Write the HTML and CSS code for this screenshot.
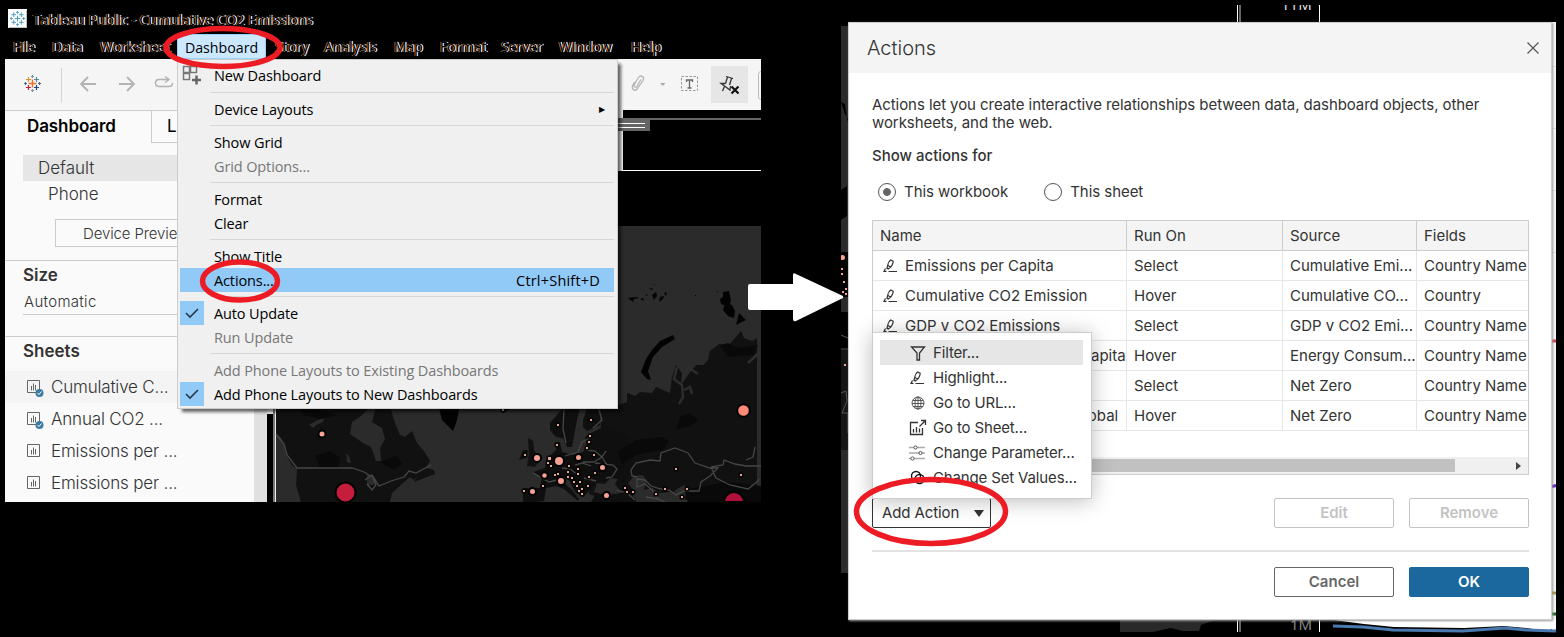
FILE: index.html
```html
<!DOCTYPE html>
<html lang="en">
<head>
<meta charset="utf-8">
<title>Tableau Public - Cumulative CO2 Emissions</title>
<link rel="stylesheet" href="styles.css">
</head>
<body>
<svg class="defs" width="0" height="0">
  <symbol id="sheet" viewBox="0 0 18 18"><path d="M1.500 1.500h12v12h-12z" fill="none" stroke="#666"/><path d="M5.500 7v4.500M7.500 4.500v7M9.500 6v5.500" stroke="#666" fill="none"/></symbol>
  <symbol id="pen" viewBox="0 0 16 14"><path d="M7.700 1l2.400 1.200c.4 1.600-1.600 5-2.400 5.800L4.800 6.500C4.800 5 6.300 2 7.700 1zM4.800 6.500l-.9 2.700 1.300.8 2.500-2M2.500 9.500l-1.500 2.800h2.500M5.500 12.500h8.500" fill="none" stroke="#333" stroke-width="1.200"/></symbol>
</svg>

<main class="desktop">
  <section class="app">
    <header class="titlebar">
      <svg class="logo" viewBox="0 0 20 20"><path fill="#fff" d="M0 0h20v20H0z"/><path d="M19.500 1v18.500H1" stroke="#bbb" fill="none"/><path d="M10 7v6M7 10h6M6 3.500v5M3.500 6h5M14 3.500v5M11.500 6h5M6 11.500v5M3.500 14h5M14 11.500v5M11.500 14h5M10 2v3M8.500 3.500h3M10 15v3M8.500 16.500h3M2 10h3M3.500 8.500v3M15 10h3M16.500 8.500v3" stroke="#4b9cc0" fill="none"/></svg>
      <span class="ghost app-name">Tableau Public - Cumulative CO2 Emissions</span>
    </header>
    <nav class="menubar">
      <span class="ghost file">File</span><span class="ghost data">Data</span><span class="ghost worksheet">Worksheet</span><span class="current">Dashboard</span><span class="ghost story">Story</span><span class="ghost analysis">Analysis</span><span class="ghost map-m">Map</span><span class="ghost format">Format</span><span class="ghost server">Server</span><span class="ghost window-m">Window</span><span class="ghost help">Help</span>
    </nav>
    <div class="toolbar">
      <svg class="tools-left" width="173" height="51" viewBox="5 59 173 51">
        <g fill="none" stroke-width="1.200"><path d="M32.500 79.500v8M28.500 83.500h8" stroke="#e8762d" stroke-width="1.500"/><path d="M28.500 77v5M26 79.500h5" stroke="#eb912c"/><path d="M36.500 77v5M34 79.500h5" stroke="#59879b"/><path d="M28.500 85v5M26 87.500h5" stroke="#c72037"/><path d="M36.500 85v5M34 87.500h5" stroke="#1f457e"/><path d="M32.500 75v3M31 76.500h3M32.500 89v3M31 90.500h3" stroke="#7199a6"/><path d="M24 83.500h3M25.500 82v3M38 83.500h3M39.500 82v3" stroke="#5b6591"/></g>
        <path d="M61.500 68v34.500" stroke="#d4d4d4"/>
        <path d="M96 84H81.500M88 77l-7 7 7 7M119 84h14.500M127 77l7 7-7 7" fill="none" stroke="#b3b3b3" stroke-width="1.800"/>
        <path d="M163 79.500h-4q-3.500 0-3.500 3.500t3.500 3.500h10q3.500 0 3.500-3.500" fill="none" stroke="#b3b3b3" stroke-width="1.500"/><path d="M162 79.500h6m-3-3l4 3-4 3" fill="none" stroke="#b3b3b3" stroke-width="1.500"/>
      </svg>
      <svg class="tools-right" width="143" height="51" viewBox="618 59 143 51">
        <path d="M711 66h37v37h-37z" fill="#e6e6e6"/>
        <path d="M634.500 82l-2 4c-1 4 2.500 5.500 4.500 3l6-8.500c2-4-2.500-6-4.500-3l-4.500 7.500c-.5 2.500 2 3 3 1.200l4-6.700" fill="none" stroke="#b5b5b5" stroke-width="1.300"/>
        <path d="M660 83h5.500l-2.700 3z" fill="#aaa"/>
        <path d="M681.500 76.500h16v14h-16z" fill="none" stroke="#999" stroke-dasharray="2.500 1.500"/>
        <path d="M686.500 82v-2h6v2M689.500 80v8M687.500 88h4" fill="none" stroke="#666" stroke-width="1.300"/>
        <path d="M726 76.500l7 2M727.500 77l-2 6.500M731.500 78.500l-2 6.500M725.500 83.500l-4.500 0 9 6.500.5-4M724.500 86.500l-2 4.500" fill="none" stroke="#333" stroke-width="1.300"/>
        <path d="M731.500 86.500l7 7m0-7l-7 7" stroke="#111" stroke-width="2.200"/>
        <path d="M761 71.500q-2.500 0-2.500 3v22q0 3 2.500 3" stroke="#bbb" fill="none"/>
      </svg>
    </div>
    <div class="workspace">
      <aside class="side">
        <div class="tabs"><b>Dashboard</b><span>L</span></div>
        <div class="device default">Default</div>
        <div class="device phone">Phone</div>
        <div class="preview">Device Preview</div>
        <div class="size"><b>Size</b><div>Automatic</div></div>
        <div class="sheets">
          <h3>Sheets</h3>
          <div class="sheet hot"><svg><use href="#sheet"/><circle cx="13.500" cy="14" r="4" fill="#3d7c9e"/><path d="M11.500 14l1.500 1.500 2.500-3" stroke="#fff" fill="none"/></svg><span>Cumulative C...</span></div>
          <div class="sheet"><svg><use href="#sheet"/><circle cx="13.500" cy="14" r="4" fill="#3d7c9e"/><path d="M11.500 14l1.500 1.500 2.500-3" stroke="#fff" fill="none"/></svg><span>Annual CO2 ...</span></div>
          <div class="sheet"><svg><use href="#sheet"/></svg><span>Emissions per ...</span></div>
          <div class="sheet"><svg><use href="#sheet"/></svg><span>Emissions per ...</span></div>
        </div>
      </aside>
      <svg class="canvas" width="494" height="392" viewBox="267 110 494 392">
        <path d="M267 110h494v392H267z"/>
        <path d="M267 110h356v61h-356zM267 402h8v12h-8z" fill="#f5f5f5"/>
        <path d="M618 118h143v2H618zM618 119h32v12h-32z" fill="#666"/>
        <path d="M618 123.500h27M618 127.500h27M618 170.500h143" stroke="#fff"/>
        <path d="M273 408h2v94h-2z" fill="#777"/><path d="M275 408h1v94h-1z" fill="#eee"/>
        <path d="M276 226h485v276H276z" fill="#2b2b2b"/>
        <g fill="#111">
          <path d="M276 404v29l6 6 3 8 2 10 5 8 5 4-1 16 5 17h89l2-9 11-10 7-6 4 3 4-5-4 7 21-8-1-4-8-2 4-7-6-10-7-8-5-12-6 5-4-5-7-12-6-15z"/>
          <path d="M600 404l18 1 9-3v-9l8 3 5-4 12 1 4-6 14 6 2-16 4-12 6 8-1 12 7-10 8-10h7l5-5 2-9 9-7 9 2 7-8 6-7 3 7 8 3 5-3v162h-71l-8-9-18 2-8-5-14 3-6 6-12 6-9-4-2-9-8 8-12-4 1-8-9 1 0-9-12-3 2-8 10-5 8-14 8-8 4-10z"/>
        </g>
        <path d="M533 472l12-4 3-10 8-8v-8h4l2 10 11 3 10-3 4-5-2-10 8-5 12-6 22 10 6 34-10 13-12-1-16-2-2 7-5 5-5 5-8-5-7-14-8 2 11 9 8 10-1 2-14-12-8-3-10 2-2 13-14 2h-7v-15h17l2-11zM550 430v-7l13-15h17l-3 12-5 27h-5l-4-9-7-1zM583 420l5-14h12v19l-13 6-4-4zM591 502l4-7 18-3 16 3 14 7z" fill="#0f0f0f"/>
        <path d="M438 404l4 16 11 11 4-11 3-16zM498 408l5 5 7-4v-6z" fill="#030303"/>
        <path d="M528 438l5 3 1 9 6 10-5 7-8-1 2-12zM523 450h5l-2 8-7 2z" fill="#101010"/>
        <path d="M370 407l-9 9-9 6-2 12 13 9 8 4 5 14h5l-1-13 5-9-3-11-10-6 4-15zM390 406l5 17 5 12 6 2-1-16-8-6 2-9zM309 425l7-4 8-3-1 4-7 3-2 3zM597 483l8 1 5-6 8 1-3 5 7 9-16 2-12-3zM634 476l9-1 4 6-3 8 3 9-3 4h-8l-2-11-6-8zM675 490l9-5 5 8-8 8zM367 474l7 2 2 8-9 2zM346 453l3 3 2 7-4-1z" fill="#2b2b2b"/>
        <path d="M673 335l-13 6-8 9-6 9-5 13 6 7 4 1-3-9 5-14 9-10 13-8zM723 292l6-1 2 9-2 7-8-3-1-5 3-2zM725 303l7 2 3 6-1 7-6-2-5-6zM739 313l7 7-10 5zM652 295l4-3 1 4-3 4zM628 298l8-1 3 1-5 1-1 3zM660 297l4-1-1 3-4 3zM664 293l3-1-1 4zM649 289l4-1-1 2zM640 299l3-1 1 3zM653 284l2 0 0 1M646 294l2 1-2 1zM717 291h1v1h-1zM695 295h1v1h-1z" fill="#030303"/>
        <path d="M720 345l8-2 10 5 20-3-5 10-25 2zM680 417l10-4 8 7-8 6-14 3zM636 440l25-3 8 4-5 8-28 6-14 9-4-12zM684 490l43-8 34 4v16h-73zM315 456l15-5 10 7-2 9h-18zM380 462l16-6 6 7-8 7zM300 408l25 3 12 4-17 4-16-4z" fill="#090909"/>
        <g fill="none" stroke="#464646" stroke-width="1.300">
          <path d="M276 434l8 10 3 11 10 13 12 0h43l12 4 10 6 5 8 12-5 13-4 5-6 7 2 15-8M365 480l7-5 4 10-4 5-5-6"/>
          <path d="M564 409l-1 20 3 14M598 407l4 13-9 8M590 438l-8 4-4 10-13 4M586 450l9 1 7 6-8 5M583 462h11M533 473l16 9 8-2M562 468l8 1 8 6M584 478l12 3M575 465l7-2 9 3M595 463l18 2 4 4-5 8-6 1M607 465l-5-8 4-6"/>
          <path d="M631 470l5-7 14-3 10 1 1-8 14-5 8 3 5 2 7 10 15 5 8 0-8 8-9 6-2 9-15 0-8 4-7-5-8-1-10-3-6-6-8-1v8l8-3 7 6 5 8M631 470l1 6 5 1M711 467l12-2 1-5 11 4 11 2 15 0M711 467l5 11 14 7 18 4 10-8 1-2M746 460l7-3 2-10M617 490l10 3 8 7M646 497l12 2 7 3"/>
        </g>
        <path d="M748 363l13-12M677 367l-3 12 8 6 1 12-4 7M683 377l6-9 9 6M684 390l6-3 2 7" stroke="#2d2d2d" stroke-width="2.500" fill="none"/>
        <g stroke="#030303" stroke-width="2">
          <circle cx="345.500" cy="492.500" r="10" fill="#c51d3b"/><path d="M724 502a10 10 0 0 1 20 0z" fill="#b0113c"/><circle cx="743.500" cy="410.500" r="6.300" fill="#fb8a76"/>
          <g fill="#f8a293"><circle cx="322" cy="434" r="3.500"/><circle cx="537" cy="458" r="4"/><circle cx="559" cy="461" r="5"/><circle cx="544.500" cy="475.500" r="3.300"/><circle cx="561" cy="481" r="4"/><circle cx="578.500" cy="457.500" r="3.500"/><circle cx="602.500" cy="467.500" r="3.500"/><circle cx="532.500" cy="491.500" r="3.500"/><circle cx="606.500" cy="495.500" r="3.500"/></g>
        </g>
        <path class="small-dots" d="M557 424h2v2h-2zM590 419h2v2h-2zM589 435h2v2h-2zM588 441h2v2h-2zM586 447h2v2h-2zM593 454h2v2h-2zM556 444h2v2h-2zM524 454h2v2h-2zM548 457h3v3h-3zM547 462h2v2h-2zM550 465h2v2h-2zM568 465h2v2h-2zM577 468h2v2h-2zM567 471h2v2h-2zM577 473h2v2h-2zM554 474h2v2h-2zM557 473h2v2h-2zM567 476h2v2h-2zM571 477h2v2h-2zM573 481h2v2h-2zM579 481h2v2h-2zM576 485h2v2h-2zM581 488h2v2h-2zM578 490h2v2h-2zM581 493h2v2h-2zM588 476h2v2h-2zM594 472h2v2h-2zM587 485h2v2h-2zM542 485h2v2h-2zM523 490h2v2h-2zM624 487h2v2h-2zM626 491h2v2h-2zM632 491h2v2h-2zM655 493h2v2h-2zM664 488h2v2h-2zM686 488h2v2h-2zM681 496h2v2h-2zM675 468h2v2h-2zM740 474h2v2h-2zM502 409h2v2h-2z"/>
      </svg>
    </div>
  </section>

  <div class="menu">
    <div class="item"><svg class="new-icon" viewBox="0 0 24 24"><path d="M3.500 2.500h6v6h-6zM10.500 2.500h6v6h-6zM3.500 9.500h6v6h-6z" fill="none" stroke="#777" stroke-width="1.500"/><path d="M16.500 11.500v9M12 16h9" stroke="#666" stroke-width="2.500"/></svg>New Dashboard</div><hr>
    <div class="item">Device Layouts<span class="sub">&#9654;</span></div><hr>
    <div class="item">Show Grid</div><div class="item off">Grid Options...</div><hr>
    <div class="item">Format</div><div class="item">Clear</div><hr>
    <div class="item">Show Title</div><div class="item selected">Actions...<kbd>Ctrl+Shift+D</kbd></div><hr>
    <div class="item checked"><svg><path d="M6 12l4 4 8-8" fill="none" stroke="#26384a" stroke-width="1.600"/></svg>Auto Update</div><div class="item off">Run Update</div><hr>
    <div class="item off">Add Phone Layouts to Existing Dashboards</div>
    <div class="item checked"><svg><path d="M6 12l4 4 8-8" fill="none" stroke="#26384a" stroke-width="1.600"/></svg>Add Phone Layouts to New Dashboards</div>
  </div>

  <svg class="behind" width="723" height="637" viewBox="841 0 723 637">
    <path d="M841 26h8v547h-8z" fill="#2b2b2b"/><path d="M841 102l4 2 2 14 2 10v-8l-4-6zM841 190l6-4v30l-6 4zM841 252h8v45h-8zM841 312h8v36h-8z"/><path d="M841 350h8v100h-8z" fill="#151515"/><path d="M841 335l7 3M841 393l5-2 1 10-5 12h6v20" stroke="#555" fill="none"/>
    <g fill="#f8a293"><circle cx="842.500" cy="257.500" r="2.500"/><path d="M841 268h2v2h-2zM841 273h2v2h-2zM843 281h2v2h-2zM845 288h2v2h-2zM842 291h2v2h-2zM845 293h2v2h-2zM844 364h2v2h-2z"/></g>
    <path d="M1237.500 5v627M1319.500 5v627" stroke="#fff"/><path d="M1239 5h2v627h-2z" fill="#666"/>
    <path d="M1552 22h4v610h-4z" fill="#f7f7f7"/><path d="M1552 66.500h4m-4 62h4m-4 62h4m-4 62h4" stroke="#ddd"/><path d="M1552 341h4" stroke="#d63e50" stroke-width="3"/><path d="M1552 593h4" stroke="#ad9138" stroke-width="3"/><path d="M1552 486.500l4-1" stroke="#6b22c7" stroke-width="3"/><path d="M1552 614h4" stroke="#176b23" stroke-width="3"/>
    <path d="M1120 620h95l-14 5-2 6h-16l-12-3-18 4h-33z" fill="#292929"/>
    <path d="M1320 620h236v7l-8 4-22-3-22-2-40 2-70-1-30-3-30-4h-14z" fill="#fff"/><path d="M1333 626l30 1 30 3 70 1 42-3 22 2 29 1" stroke="#4979ae" stroke-width="3" fill="none"/>
  </svg>
  <div class="tick top-tick"><span>11M</span></div>
  <div class="tick bottom-tick"><span>1M</span></div>

  <section class="dialog">
    <header><h2>Actions</h2><svg width="14" height="14"><path d="M1.500 1.500l11 11m0-11l-11 11" stroke="#555" stroke-width="1.200"/></svg></header>
    <div class="dialog-body">
      <p>Actions let you create interactive relationships between data, dashboard objects, other<br>worksheets, and the web.</p>
      <h4>Show actions for</h4>
      <div class="radios"><label><i class="radio on"></i>This workbook</label><label><i class="radio"></i>This sheet</label></div>
      <div class="grid">
        <div class="row head"><span>Name</span><span>Run On</span><span>Source</span><span>Fields</span></div>
        <div class="row"><span><svg><use href="#pen"/></svg>Emissions per Capita</span><span>Select</span><span>Cumulative Emi...</span><span>Country Name</span></div>
        <div class="row"><span><svg><use href="#pen"/></svg>Cumulative CO2 Emission</span><span>Hover</span><span>Cumulative CO...</span><span>Country</span></div>
        <div class="row"><span><svg><use href="#pen"/></svg>GDP v CO2 Emissions</span><span>Select</span><span>GDP v CO2 Emi...</span><span>Country Name</span></div>
        <div class="row"><span class="tail capita">Capita</span><span>Hover</span><span>Energy Consum...</span><span>Country Name</span></div>
        <div class="row"><span></span><span>Select</span><span>Net Zero</span><span>Country Name</span></div>
        <div class="row"><span class="tail global">Global</span><span>Hover</span><span>Net Zero</span><span>Country Name</span></div>
        <div class="scroll"><i></i><svg width="6" height="8"><path d="M0 0l5 4-5 4z" fill="#444"/></svg></div>
      </div>
      <div class="actions"><button class="add">Add Action<svg width="11" height="7"><path d="M0 0h10L5 7z" fill="#333"/></svg></button><button class="off-btn">Edit</button><button class="off-btn">Remove</button></div>
      <footer><button class="cancel">Cancel</button><button class="ok">OK</button></footer>
    </div>
  </section>

  <div class="popup">
    <div class="choice active"><svg viewBox="0 0 18 18"><path d="M2.500 3h13l-5 6v7H8V9z" fill="none" stroke="#333" stroke-width="1.300"/></svg>Filter...</div>
    <div class="choice"><svg viewBox="-1 -2 18 18"><use href="#pen" width="16" height="14"/></svg>Highlight...</div>
    <div class="choice"><svg viewBox="0 0 18 18"><g fill="none" stroke="#555"><circle cx="9" cy="9" r="6"/><ellipse cx="9" cy="9" rx="3" ry="6"/><path d="M9 3v12M4 6.500h10M3 9.500h12M4 12.500h10"/></g></svg>Go to URL...</div>
    <div class="choice"><svg viewBox="0 0 18 18"><g fill="none" stroke="#333" stroke-width="1.300"><path d="M9 3.500H1.500v12h12V9M4.500 10v3.500M7.500 8v5.500M10.500 9.500v4M10.500 7.500l6-6M12 1.500h4.500V6"/></g></svg>Go to Sheet...</div>
    <div class="choice"><svg viewBox="1 0 18 18"><path d="M0 3.500h17M0 9h17M0 14.500h17" stroke="#aaa" stroke-width="1.300"/><g fill="#fff" stroke="#555"><circle cx="7.500" cy="3.500" r="1.600"/><circle cx="12.500" cy="9" r="1.600"/><circle cx="4.500" cy="14.500" r="1.600"/></g></svg>Change Parameter...</div>
    <div class="choice"><svg viewBox="0 0 18 18"><g fill="none" stroke="#111" stroke-width="1.400"><circle cx="7" cy="7" r="4.500"/><circle cx="10.500" cy="10" r="4.500"/></g></svg>Change Set Values...</div>
  </div>

  <svg class="marks" width="1564" height="637">
    <g fill="none" stroke="#ed1c24" stroke-width="5.500"><ellipse cx="223" cy="47.500" rx="57" ry="19"/><ellipse cx="240" cy="281" rx="37.500" ry="19"/><ellipse cx="931" cy="511.500" rx="74.500" ry="32"/></g>
    <path d="M750 284h43v-9q0-3 3-1l47 22v2l-47 23q-3 1-3-2v-9h-43q-2 0-2-2v-22q0-2 2-2z" fill="#fff"/>
  </svg>
</main>
</body>
</html>
```
FILE: styles.css
```css
* { box-sizing: border-box; }
body { margin: 0; background: #000; overflow: hidden; }
.defs { position: absolute; }
.desktop { position: relative; width: 1564px; height: 637px; overflow: hidden; background: #000; font: 14.500px/24px "Open Sans", "Noto Sans", sans-serif; color: #000; }
svg { display: block; flex: none; }
h2, h3, h4, p { margin: 0; }

/* main application window */
.app { position: absolute; left: 5px; top: 0; width: 756px; height: 502px; display: flex; flex-direction: column; }
.titlebar { height: 34px; padding: 9px 0 0 3px; display: flex; flex: none; }
.logo { width: 19px; height: 19px; }
.app-name { margin: -1px 0 0 6px; font-size: 14px; }
.ghost { color: #000; text-shadow: -1px 0 #b5641c, 1px 0 #fff, 1px 0 1px #8fc0f5; white-space: nowrap; flex: none; }
.menubar { height: 25px; padding-left: 8px; display: flex; flex: none; line-height: 26px; font-size: 14px; }
.file { width: 39px; } .data { width: 48px; } .worksheet { width: 77px; }
.current { width: 89px; text-align: center; background: #cce8ff; border: 1px solid #99d1ff; line-height: 25px; font-size: 14.200px; }
.story { width: 49px; margin-left: 9px; } .analysis { width: 70px; } .map-m { width: 46px; } .format { width: 61px; } .server { width: 58px; } .window-m { width: 72px; }
.toolbar { height: 51px; background: #f5f5f5; display: flex; justify-content: space-between; flex: none; }
.workspace { display: flex; flex: 1; }
.side { width: 262px; height: 392px; background: #fafafa; border-top: 1px solid #ccc; border-right: 13px solid #e0e0e0; font-family: Inter, sans-serif; color: #333; display: flex; flex-direction: column; }
.tabs { display: flex; height: 44px; font-size: 17px; line-height: 31px; color: #000; }
.tabs b { width: 146px; padding-left: 22px; font-weight: 600; letter-spacing: -.1px; }
.tabs span { height: 32px; flex: 1; padding-left: 15px; border: solid #ccc; border-width: 0 0 1px 1px; }
.device { height: 26px; margin-left: 18px; line-height: 26px; font-size: 17px; font-weight: 300; }
.default { background: #e6e6e6; padding-left: 15px; }
.phone { padding-left: 25px; }
.preview { height: 28px; margin: 12px 0 13px 50px; padding-left: 27px; border: 1px solid #ccc; font-size: 15px; line-height: 27px; white-space: nowrap; overflow: hidden; font-weight: 300; letter-spacing: -.12px; }
.size { height: 76px; padding: 1px 0 0 18px; border-top: 1px solid #ccc; }
.size b { font-size: 17px; font-weight: 600; line-height: 26px; }
.size div { border-bottom: 1px solid #ccc; height: 27px; line-height: 28px; padding-left: 1px; font-size: 15px; font-weight: 300; letter-spacing: .3px; }
.sheets { border-top: 1px solid #ccc; padding-top: 1px; }
.sheets h3 { font-size: 17px; line-height: 26px; padding-left: 18px; font-weight: 600; margin-bottom: 7px; }
.sheet { height: 32px; display: flex; padding: 7px 0 0 21px; font-size: 17px; line-height: 19px; font-weight: 300; gap: 7px; letter-spacing: -.18px; }
.sheet svg { width: 18px; height: 18px; margin-top: 1px; }
.hot { background: #f4f4f4; }
.small-dots { fill: #e6a497; stroke: #050505; stroke-width: 3px; stroke-linejoin: round; paint-order: stroke; }

/* dropdown menu */
.menu { position: absolute; left: 177px; top: 59px; width: 441px; height: 350px; padding: 4px 3px 0 2px; background: #f0f0f0; border: 1px solid #ccc; box-shadow: 4px 4px 3px -1px #0009; }
.menu hr { height: 1px; border: 0; margin: 4px 0 4px 30px; background: #d7d7d7; }
.item { height: 24px; line-height: 25px; position: relative; padding-left: 34px; white-space: nowrap; display: flex; letter-spacing: -.12px; }
.item svg { position: absolute; left: 0; top: 0; width: 24px; height: 24px; }
.item:first-child { line-height: 24px; }
.off { color: #777; }
.selected, .checked svg { background: #91c9f7; }
.item kbd { font: inherit; margin-left: auto; padding-right: 14px; letter-spacing: .2px; }
.sub { font-size: 8px; line-height: 23px; margin-left: auto; padding-right: 9px; }

/* chart fragments around the dialog */
.behind { position: absolute; left: 841px; top: 0; }
.tick { position: absolute; overflow: hidden; color: #888; font: 15px/16px "Noto Sans", sans-serif; }
.tick span { display: block; }
.top-tick { left: 1281px; top: 5px; height: 5px; }
.top-tick span { margin-top: -9px; color: #ddd; }
.bottom-tick { left: 1290px; top: 616px; height: 16px; }

/* actions dialog */
.dialog { position: absolute; left: 848px; top: 22px; width: 704px; height: 598px; background: #fff; border: 1px solid #ccc; box-shadow: 1px 1px 2px #999; font: 15px/18px Inter, sans-serif; color: #333; }
.dialog header { height: 50px; background: #f4f4f4; display: flex; justify-content: space-between; align-items: center; padding: 0 11px 0 18px; }
.dialog h2 { font-size: 20px; font-weight: 300; }
.dialog-body { padding: 23px 22px 0 23px; }
.dialog p { letter-spacing: -.07px; }
.dialog h4 { font-size: 15px; font-weight: 500; margin-top: 15px; }
.radios { display: flex; height: 55px; padding: 18px 0 0 6px; gap: 36px; }
.radios label { display: flex; gap: 8px; height: 18px; letter-spacing: -.05px; }
.radio { width: 18px; height: 18px; border: 1px solid #555; border-radius: 50%; }
.on { background: radial-gradient(circle, #666 3.500px, #fff 4.300px); }
.grid { height: 255px; border: 1px solid #ccc; }
.row { display: grid; grid-template-columns: 254px 156px 134px 111px; height: 30px; line-height: 30px; }
.row span { border: solid #e6e6e6; border-width: 0 1px 1px 0; padding-left: 7px; white-space: nowrap; overflow: hidden; display: flex; }
.row span:last-child { border-right-color: transparent; }
.row svg { width: 16px; height: 14px; margin: 8px 6px 0 3px; }
.head { background: #f4f4f4; }
.head span { border-color: #ccc; }
.row .capita { padding-left: 207px; } .row .global { padding-left: 200px; }
.scroll { margin-top: 26px; height: 17px; background: #f0f0f0; padding: 2px 6px 2px 17px; display: flex; justify-content: space-between; align-items: center; }
.scroll i { width: 565px; height: 13px; background: #c1c1c1; }
button { height: 30px; width: 120px; padding: 0; background: #fff; border: 1px solid #666; border-radius: 2px; font: 600 15px/26px Inter, sans-serif; color: #666; }
.actions { margin-top: 23px; height: 54px; border-bottom: 2px solid #e3e3e3; display: flex; gap: 15px; }
.actions .add { width: 119px; margin-right: auto; color: #333; font-weight: 400; border-color: #333; display: flex; align-items: center; gap: 15px; padding: 0 0 1px 9px; white-space: nowrap; letter-spacing: -.1px; }
.add svg { margin-top: 2px; }
.off-btn { color: #c3c3c3; border-color: #c3c3c3; padding-bottom: 1px; }
.dialog footer { margin-top: 15px; display: flex; justify-content: flex-end; gap: 15px; }
.ok { color: #fff; background: #1b689e; border-color: #1b689e; }

/* action type menu */
.popup { position: absolute; left: 872px; top: 332px; width: 220px; height: 167px; background: #fff; border: 1px solid #ccc; padding: 7px 8px 0 7px; font: 15px/25px Inter, sans-serif; color: #333; box-shadow: 0 2px 20px #0004; letter-spacing: -.15px; }
.choice { height: 25px; padding-left: 29px; display: flex; align-items: center; gap: 6px; white-space: nowrap; }
.choice svg { width: 18px; height: 18px; }
.active { background: #e6e6e6; }

/* annotations */
.marks { position: absolute; inset: 0; }
```
